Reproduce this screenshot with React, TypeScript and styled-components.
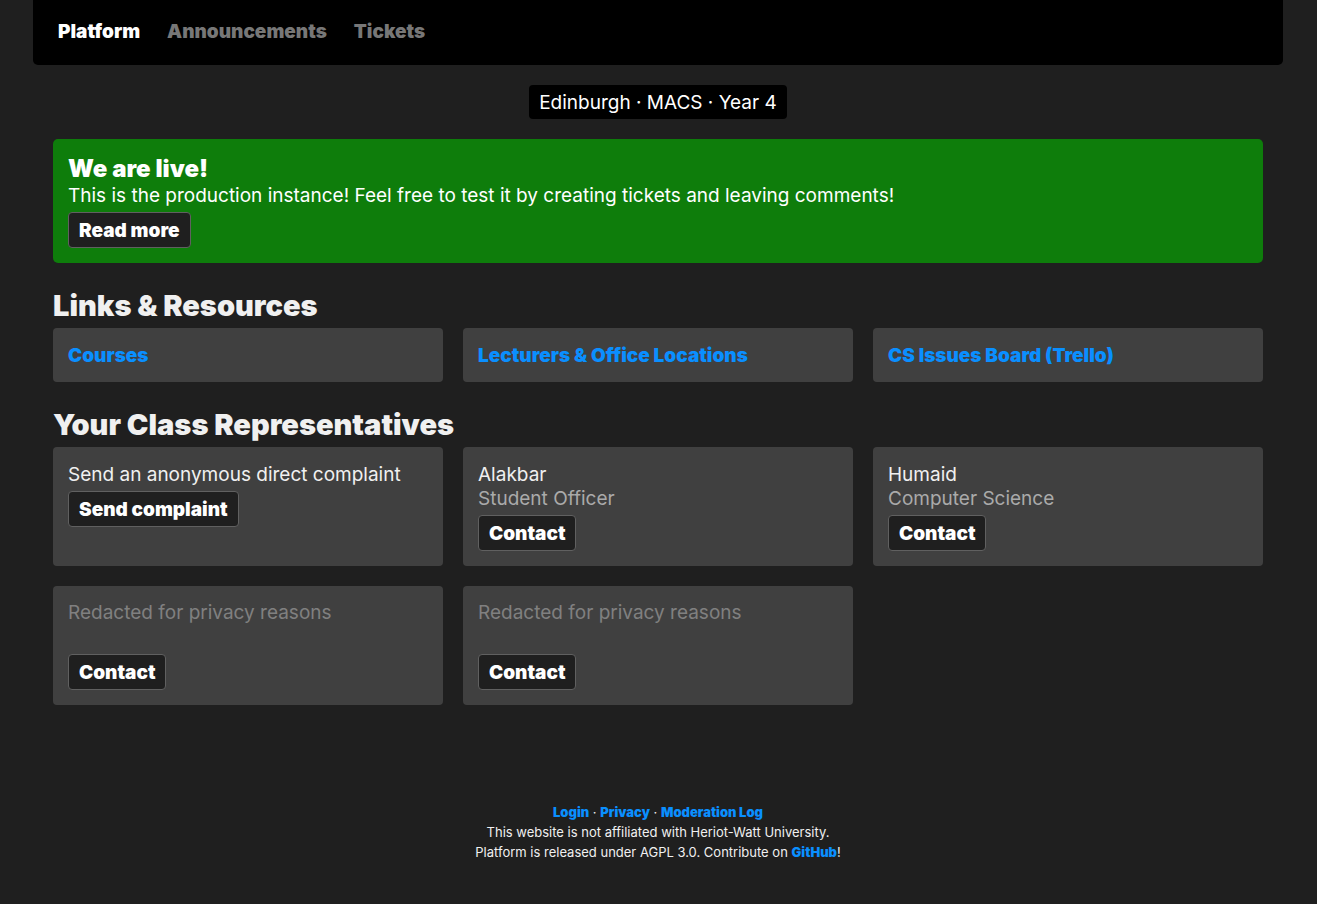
import React from "react";
import styled, { createGlobalStyle } from "styled-components";

const GlobalStyle = createGlobalStyle`
  *, *::before, *::after { box-sizing: border-box; }
  body {
    margin: 0;
    background: #1f1f1f;
    color: #f0f0f0;
    font-family: Inter, "Liberation Sans", sans-serif;
    font-size: 19px;
    line-height: 24px;
  }
`;

const Page = styled.div`
  margin: 0 34px 0 33px;
`;

const NavBar = styled.nav`
  display: flex;
  gap: 27px;
  padding: 20px 25px 21px;
  background: #000;
  border-radius: 0 0 5px 5px;
`;

const NavLink = styled.a<{ $active?: boolean }>`
  color: ${(p) => (p.$active ? "#fff" : "#777")};
  font-weight: 900;
  text-decoration: none;
`;

const Main = styled.main`
  padding: 20px;
`;

const CourseRow = styled.div`
  display: flex;
  justify-content: center;
  margin-bottom: 20px;
`;

const CourseTag = styled.div`
  padding: 6px 10px 4px;
  background: #000;
  color: #fff;
  border-radius: 4px;
`;

const Banner = styled.section`
  padding: 15px 15px 14px;
  background: #0e7d0b;
  color: #fff;
  border-radius: 5px;
`;

const BannerTitle = styled.h2`
  margin: 0;
  font-size: 24px;
  line-height: 30px;
  font-weight: 900;
`;

const Text = styled.p<{ $muted?: boolean }>`
  margin: 0;
  color: ${(p) => (p.$muted ? "#aaa" : "inherit")};
`;

const Redacted = styled.p`
  margin: 0;
  min-height: 48px;
  color: #808080;
  line-height: 21px;
`;

const Button = styled.button`
  display: block;
  margin: 4px 0 1px;
  padding: 6px 10px 4px;
  background: #1f1f1f;
  color: #fff;
  border: 1px solid #606060;
  border-radius: 4px;
  font: inherit;
  font-weight: 900;
`;

const SectionTitle = styled.h1`
  margin: 25px 0 5px;
  font-size: 29px;
  line-height: 35px;
  font-weight: 900;
`;

const Grid = styled.div`
  display: grid;
  grid-template-columns: repeat(3, minmax(0, 1fr));
  gap: 20px;
`;

const Card = styled.div`
  padding: 16px 15px 14px;
  background: #404040;
  border-radius: 4px;
`;

const Link = styled.a`
  color: #0a8fff;
  font-weight: 900;
  text-decoration: none;
`;

const Footer = styled.footer`
  padding: 77px 20px 41px;
  font-size: 13px;
  line-height: 20px;
  text-align: center;
`;

const links = ["Courses", "Lecturers & Office Locations", "CS Issues Board (Trello)"];

const representatives = [
  { name: "Alakbar", role: "Student Officer" },
  { name: "Humaid", role: "Computer Science" },
];

export default function App() {
  return (
    <>
      <GlobalStyle />
      <Page>
        <NavBar>
          <NavLink href="#" $active>Platform</NavLink>
          <NavLink href="#announcements">Announcements</NavLink>
          <NavLink href="#tickets">Tickets</NavLink>
        </NavBar>
        <Main>
          <CourseRow>
            <CourseTag>Edinburgh · MACS · Year 4</CourseTag>
          </CourseRow>
          <Banner>
            <BannerTitle>We are live!</BannerTitle>
            <Text>This is the production instance! Feel free to test it by creating tickets and leaving comments!</Text>
            <Button type="button">Read more</Button>
          </Banner>
          <SectionTitle>Links &amp; Resources</SectionTitle>
          <Grid>
            {links.map((label) => (
              <Card key={label}>
                <Link href="#">{label}</Link>
              </Card>
            ))}
          </Grid>
          <SectionTitle>Your Class Representatives</SectionTitle>
          <Grid>
            <Card>
              <Text>Send an anonymous direct complaint</Text>
              <Button type="button">Send complaint</Button>
            </Card>
            {representatives.map((rep) => (
              <Card key={rep.name}>
                <Text>{rep.name}</Text>
                <Text $muted>{rep.role}</Text>
                <Button type="button">Contact</Button>
              </Card>
            ))}
            {[1, 2].map((id) => (
              <Card key={id}>
                <Redacted>Redacted for privacy reasons</Redacted>
                <Button type="button">Contact</Button>
              </Card>
            ))}
          </Grid>
        </Main>
        <Footer>
          <div>
            <Link href="#login">Login</Link> · <Link href="#privacy">Privacy</Link> · <Link href="#log">Moderation Log</Link>
          </div>
          <div>This website is not affiliated with Heriot-Watt University.</div>
          <div>
            Platform is released under AGPL 3.0. Contribute on <Link href="#github">GitHub</Link>!
          </div>
        </Footer>
      </Page>
    </>
  );
}
